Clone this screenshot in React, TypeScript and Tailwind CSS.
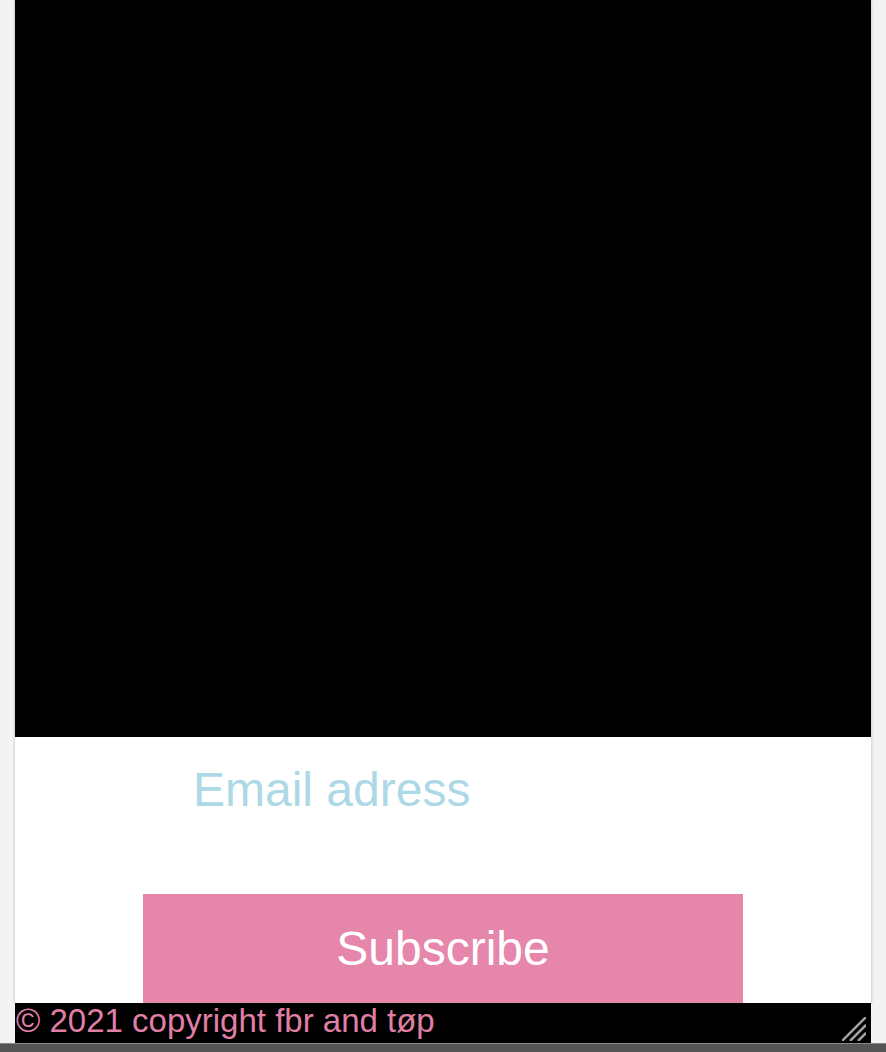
export default function App() {
  return (
    <div className="min-h-[1052px] w-full bg-[#f3f3f3] flex flex-col" style={{ fontFamily: '"Liberation Sans", Arial, sans-serif' }}>
      <div className="mx-[15px] bg-white shadow-[0_0_3px_rgba(0,0,0,0.25)] flex flex-col">
        {/* hero */}
        <div className="h-[737px] bg-black" />

        {/* signup form */}
        <form className="flex flex-col" onSubmit={(e) => e.preventDefault()}>
          <input
            type="email"
            placeholder="Email adress"
            className="mt-[28px] ml-[178px] w-[500px] h-[48px] text-[48px] leading-none bg-transparent outline-none placeholder:text-[#add8e6] text-[#add8e6]"
          />
          <button
            type="submit"
            className="mt-[81px] ml-[128px] w-[600px] h-[109px] bg-[#e586aa] text-white text-[48px] leading-none"
          >
            Subscribe
          </button>
        </form>
      </div>

      {/* footer */}
      <footer className="relative mx-[15px] h-[40px] bg-black">
        <p className="pt-[1px] pl-[1px] text-[33px] leading-none text-[#e07fa5]">© 2021 copyright fbr and tøp</p>
        <svg className="absolute right-[5px] bottom-[2px]" width="24" height="24" viewBox="0 0 24 24">
          <g stroke="#a3a3a3" strokeWidth="2.5">
            <line x1="0" y1="24" x2="24" y2="0" />
            <line x1="8" y1="24" x2="24" y2="8" />
            <line x1="16" y1="24" x2="24" y2="16" />
          </g>
        </svg>
      </footer>
      <div className="h-[9px] bg-[#555] border-t border-[#8a8a8a]" />
    </div>
  )
}
